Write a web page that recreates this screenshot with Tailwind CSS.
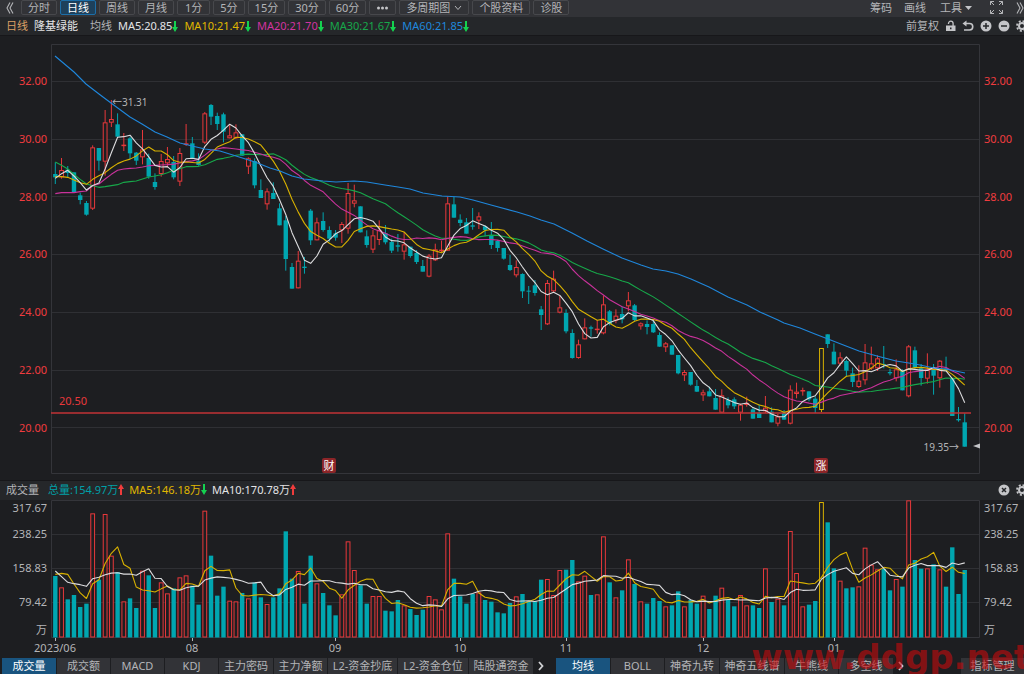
<!DOCTYPE html>
<html lang="zh-CN">
  <head>
    <meta charset="UTF-8" />
    <meta name="viewport" content="width=device-width, initial-scale=1.0" />
    <title>隆基绿能 - 日线</title>
    <script src="https://cdn.jsdelivr.net/npm/@tailwindcss/browser@4"></script>
  </head>
  <body class="relative min-h-screen flex flex-col overflow-hidden bg-[#1d1e21] text-[#b4b5b8] text-[11px] leading-4 whitespace-nowrap font-['Noto_Sans','Noto_Sans_CJK_SC',sans-serif]">
    <!-- Period toolbar -->
    <header class="flex items-start justify-between h-[17px] bg-[#323337] overflow-hidden">
      <nav class="flex gap-[3px] pl-[6px]">
        <button aria-label="收起" class="w-3 h-[15px]">
          <svg viewBox="0 0 8 12" class="w-2 h-3" fill="none" stroke="#b4b5b8" stroke-width="1.1"><path d="M4 .5 1 6l3 5.500M7 .5 4 6l3 5.500" /></svg>
        </button>
        <button class="h-[15px] leading-[13px] px-[6px] border border-[#47484c] rounded-xs">分时</button>
        <button class="h-[15px] leading-[13px] px-[6px] border border-[#1c6ea8] rounded-xs bg-[#1d405b] text-white">日线</button>
        <button class="h-[15px] leading-[13px] px-[6px] border border-[#47484c] rounded-xs">周线</button>
        <button class="h-[15px] leading-[13px] px-[6px] border border-[#47484c] rounded-xs">月线</button>
        <button class="h-[15px] leading-[13px] px-[7px] border border-[#47484c] rounded-xs">1分</button>
        <button class="h-[15px] leading-[13px] px-[6px] border border-[#47484c] rounded-xs">5分</button>
        <button class="h-[15px] leading-[13px] px-[6px] border border-[#47484c] rounded-xs">15分</button>
        <button class="h-[15px] leading-[13px] px-[6px] border border-[#47484c] rounded-xs">30分</button>
        <button class="h-[15px] leading-[13px] px-[6px] border border-[#47484c] rounded-xs">60分</button>
        <button aria-label="更多" class="flex items-center h-[15px] px-[6px] border border-[#47484c] rounded-xs">
          <svg viewBox="0 0 13 4" class="w-[13px] h-1" fill="#c4c5c8"><circle cx="2.500" cy="2" r="1.500" /><circle cx="6.500" cy="2" r="1.500" /><circle cx="10.500" cy="2" r="1.500" /></svg>
        </button>
        <button class="flex items-center gap-1 h-[15px] leading-[13px] px-[6px] border border-[#47484c] rounded-xs">
          多周期图
          <svg viewBox="0 0 8 6" class="w-2 h-[6px]" fill="none" stroke="#b4b5b8"><path d="m1 1 3 3.500L7 1" /></svg>
        </button>
        <button class="h-[15px] leading-[13px] px-[6px] border border-[#47484c] rounded-xs">个股资料</button>
        <button class="h-[15px] leading-[13px] px-[6px] border border-[#47484c] rounded-xs">诊股</button>
      </nav>
      <div class="flex items-center h-[15px]">
        <button class="mr-3">筹码</button>
        <button class="mr-[14px]">画线</button>
        <button class="flex items-center gap-[3px] mr-[18px]">
          工具
          <svg viewBox="0 0 7 4" class="w-[7px] h-1" fill="#c4c5c8"><path d="M0 0h7L3.500 4z" /></svg>
        </button>
        <button aria-label="全屏" class="mr-[13px]">
          <svg viewBox="0 0 13 13" class="w-[13px] h-[13px]" fill="none" stroke="#b4b5b8"><path d="M.5 4V.5H4M.5.5 4 4M9 .5h3.500V4M12.500.5 9 4M.5 9v3.500H4M.5 12.500 4 9M9 12.500h3.500V9M12.500 12.500 9 9" /></svg>
        </button>
        <button aria-label="展开">
          <svg viewBox="0 0 8 12" class="w-2 h-3" fill="none" stroke="#b4b5b8" stroke-width="1.1"><path d="m1 .5 3 5.500-3 5.500M4 .5 7 6l-3 5.500" /></svg>
        </button>
      </div>
    </header>

    <!-- Moving average legend -->
    <section class="flex items-center justify-between h-[18px] pl-[6px] bg-[#25272a] overflow-hidden">
      <div class="flex items-center">
        <span class="text-[#dba066]">日线</span>
        <span class="ml-[6px] text-[#e4e4e6]">隆基绿能</span>
        <span class="ml-3">均线</span>
        <span class="ml-[6px] flex items-center text-[#e4e4e6]">MA5:20.85<svg viewBox="0 0 6 11" class="w-[6px] h-[11px]" fill="#14d250"><path d="M2 0h2v6h2l-3 5-3-5h2z" /></svg></span>
        <span class="ml-[6px] flex items-center text-[#e0b800]">MA10:21.47<svg viewBox="0 0 6 11" class="w-[6px] h-[11px]" fill="#14d250"><path d="M2 0h2v6h2l-3 5-3-5h2z" /></svg></span>
        <span class="ml-[6px] flex items-center text-[#d233a0]">MA20:21.70<svg viewBox="0 0 6 11" class="w-[6px] h-[11px]" fill="#14d250"><path d="M2 0h2v6h2l-3 5-3-5h2z" /></svg></span>
        <span class="ml-[6px] flex items-center text-[#17a84a]">MA30:21.67<svg viewBox="0 0 6 11" class="w-[6px] h-[11px]" fill="#14d250"><path d="M2 0h2v6h2l-3 5-3-5h2z" /></svg></span>
        <span class="ml-[6px] flex items-center text-[#1f87dc]">MA60:21.85<svg viewBox="0 0 6 11" class="w-[6px] h-[11px]" fill="#14d250"><path d="M2 0h2v6h2l-3 5-3-5h2z" /></svg></span>
      </div>
      <div class="flex items-center gap-[6px] -mr-1">
        <button>前复权</button>
        <button aria-label="锁定">
          <svg viewBox="0 0 11 12" class="w-[11px] h-3"><path d="M3.500 4V3.500a2.300 2.300 0 0 1 4.600 0V6" fill="none" stroke="#c4c5c8" stroke-width="1.300" /><path d="M1 5.500h9.500V11H1z" fill="#c4c5c8" /><path d="M5 7.500h1.500v1.800H5z" fill="#25272a" /></svg>
        </button>
        <button aria-label="撤销">
          <svg viewBox="0 0 12 12" class="w-3 h-3"><path d="M3 3.500h4.500a3.200 3.200 0 0 1 0 6.500H2" fill="none" stroke="#c4c5c8" stroke-width="1.600" /><path d="M.5 3.500 4.500.5v6z" fill="#c4c5c8" /></svg>
        </button>
        <button aria-label="放大">
          <svg viewBox="0 0 12 12" class="w-3 h-3"><circle cx="6" cy="6" r="5.500" fill="#c4c5c8" /><path d="M6 3v6M3 6h6" stroke="#25272a" stroke-width="1.500" /></svg>
        </button>
        <button aria-label="缩小">
          <svg viewBox="0 0 12 12" class="w-3 h-3"><circle cx="6" cy="6" r="5.500" fill="#c4c5c8" /><path d="M3 6h6" stroke="#25272a" stroke-width="1.500" /></svg>
        </button>
        <button aria-label="设置">
          <svg viewBox="0 0 12 12" class="w-3 h-3" fill="none" stroke="#c4c5c8"><circle cx="6" cy="6" r="3" stroke-width="2" /><circle cx="6" cy="6" r="5" stroke-width="1.800" stroke-dasharray="2 1.927" /></svg>
        </button>
      </div>
    </section>

    <!-- Price chart -->
    <main class="flex flex-1 pt-2 pb-[6px] border-t border-[#17171a]">
      <div class="flex flex-col justify-between w-[51px] pt-[29px] pb-[38px] pr-1 text-right text-[#f03c3f]">
        <span>32.00</span><span>30.00</span><span>28.00</span><span>26.00</span><span>24.00</span><span>22.00</span><span>20.00</span>
      </div>
      <div class="relative flex-1">
        <svg id="price-chart" viewBox="51 44 929 430" preserveAspectRatio="none" class="absolute inset-0 w-full h-full"></svg>
        <span class="absolute left-[61px] top-[50px] text-[10px]">←31.31</span>
        <span class="absolute left-2 top-[349px] text-[#e8383b]">20.50</span>
        <span class="absolute right-[21px] top-[395px] text-[10px]">19.35→</span>
        <span class="absolute left-[271px] top-[414px] w-[14px] h-[15px] rounded-xs bg-[#8c2528] text-white text-center leading-[15px]">财</span>
        <span class="absolute left-[763px] top-[414px] w-[14px] h-[15px] rounded-xs bg-[#8c2528] text-white text-center leading-[15px]">涨</span>
      </div>
      <div class="flex flex-col justify-between w-11 pt-[29px] pb-[38px] pl-1 text-[#f03c3f]">
        <span>32.00</span><span>30.00</span><span>28.00</span><span>26.00</span><span>24.00</span><span>22.00</span><span>20.00</span>
      </div>
    </main>

    <!-- Volume legend -->
    <section class="flex items-center justify-between h-5 pb-[2px] pl-[6px] bg-[#25272a] border-t border-[#17171a] overflow-hidden">
      <div class="flex items-center">
        <span>成交量</span>
        <span class="ml-[9px] flex items-center text-[#00a0a8]">总量:154.97万<svg viewBox="0 0 6 11" class="w-[6px] h-[11px]" fill="#f03c3c"><path d="M2 11h2V5h2L3 0 0 5h2z" /></svg></span>
        <span class="ml-[5px] flex items-center text-[#e0b800]">MA5:146.18万<svg viewBox="0 0 6 11" class="w-[6px] h-[11px]" fill="#14d250"><path d="M2 0h2v6h2l-3 5-3-5h2z" /></svg></span>
        <span class="ml-[5px] flex items-center text-[#e4e4e6]">MA10:170.78万<svg viewBox="0 0 6 11" class="w-[6px] h-[11px]" fill="#f03c3c"><path d="M2 11h2V5h2L3 0 0 5h2z" /></svg></span>
      </div>
      <div class="flex items-center gap-[6px] -mr-1">
        <button aria-label="关闭">
          <svg viewBox="0 0 12 12" class="w-3 h-3"><circle cx="6" cy="6" r="5.500" fill="#c4c5c8" /><path d="m4 4 4 4M8 4 4 8" stroke="#25272a" stroke-width="1.500" /></svg>
        </button>
        <button aria-label="设置">
          <svg viewBox="0 0 12 12" class="w-3 h-3" fill="none" stroke="#c4c5c8"><circle cx="6" cy="6" r="3" stroke-width="2" /><circle cx="6" cy="6" r="5" stroke-width="1.800" stroke-dasharray="2 1.927" /></svg>
        </button>
      </div>
    </section>

    <!-- Volume chart -->
    <section class="flex h-[142px]">
      <div class="flex flex-col w-[51px] pr-1 text-right">
        <span class="h-[17px]">317.67</span>
        <span class="h-[34px] leading-[34px]">238.25</span>
        <span class="h-[34px] leading-[34px]">158.83</span>
        <span class="h-[34px] leading-[34px]">79.42</span>
        <span class="leading-[22px]">万</span>
      </div>
      <div class="relative flex-1">
        <svg id="volume-chart" viewBox="51 500 929 142" preserveAspectRatio="none" class="absolute inset-0 w-full h-full"></svg>
      </div>
      <div class="flex flex-col w-11 pl-1">
        <span class="h-[17px]">317.67</span>
        <span class="h-[34px] leading-[34px]">238.25</span>
        <span class="h-[34px] leading-[34px]">158.83</span>
        <span class="h-[34px] leading-[34px]">79.42</span>
        <span class="leading-[22px]">万</span>
      </div>
    </section>

    <!-- Months -->
    <div class="grid grid-cols-[137fr_143fr_125fr_106fr_137fr_131fr_190fr] h-4 pl-[55px] leading-[12px]">
      <div><span class="inline-block -translate-x-1/2">2023/06</span></div>
      <div><span class="inline-block -translate-x-1/2">08</span></div>
      <div><span class="inline-block -translate-x-1/2">09</span></div>
      <div><span class="inline-block -translate-x-1/2">10</span></div>
      <div><span class="inline-block -translate-x-1/2">11</span></div>
      <div><span class="inline-block -translate-x-1/2">12</span></div>
      <div><span class="inline-block -translate-x-1/2">01</span></div>
    </div>

    <!-- Indicator tabs -->
    <footer class="flex items-stretch justify-between h-4 leading-4">
      <div class="flex gap-px pl-[2px]">
        <button class="w-[54px] bg-[#19547f] text-white">成交量</button>
        <button class="w-[53px] bg-[#323337]">成交额</button>
        <button class="w-[53px] bg-[#323337]">MACD</button>
        <button class="w-[53px] bg-[#323337]">KDJ</button>
        <button class="w-[54px] bg-[#323337]">主力密码</button>
        <button class="w-[53px] bg-[#323337]">主力净额</button>
        <button class="w-[69px] bg-[#323337]">L2-资金抄底</button>
        <button class="w-[70px] bg-[#323337]">L2-资金仓位</button>
        <button class="w-[64px] bg-[#323337]">陆股通资金</button>
        <button aria-label="更多指标" class="w-[21px] pl-1">
          <svg viewBox="0 0 6 10" class="w-[6px] h-[10px]" fill="none" stroke="#d0d1d4" stroke-width="1.800"><path d="m1 1 3.500 4L1 9" /></svg>
        </button>
        <button class="w-[54px] bg-[#19547f] text-white">均线</button>
        <button class="w-[53px] bg-[#323337]">BOLL</button>
        <button class="w-[54px] bg-[#323337]">神奇九转</button>
        <button class="w-[64px] bg-[#323337]">神奇五线谱</button>
        <button class="w-[53px] bg-[#323337]">牛熊线</button>
        <button class="w-[54px] bg-[#323337]">多空线</button>
        <button aria-label="更多均线" class="w-4 pl-1">
          <svg viewBox="0 0 6 10" class="w-[6px] h-[10px]" fill="none" stroke="#d0d1d4" stroke-width="1.800"><path d="m1 1 3.500 4L1 9" /></svg>
        </button>
      </div>
      <button class="w-[63px] bg-[#323337]">指标管理</button>
    </footer>

    <div class="absolute -right-[6px] bottom-0 text-[34px] leading-[34px] font-bold text-[#c80a0c]/60 font-['DejaVu_Sans'] pointer-events-none">www.ddgp.net</div>

    <script>
      // Candles: kind, body top, body bottom, high, low (1/3 px below `top`).
      // d = down, u = up, y = marked
      const blocks = [
        { top: 40, rows: `d 402 412 367 432,u 390 412 354 416,d 389 399 378 412,d 397 458 397 458,d 466 480 458 493,d 489 524 483 527,u 322 506 316 510,d 324 362 324 392,u 247 365 210 407,u 237 248 180 261,d 253 290 220 290,u 314 318 279 333,d 295 340 290 357,d 338 362 336 375,u 328 352 270 373,d 354 410 341 416,d 426 441 400 449,u 363 402 342 410,u 357 370 321 382,d 366 412 348 418,u 339 425 324 438,u 310 314 252 318,d 310 355 291 355,d 362 375 340 377,u 220 308 216 312,d 195 230 192 255,d 228 252 218 270,d 223 275 218 307,u 286 295 255 295,u 277 295 253 297,d 283 347 283 347,u 355 380 352 402` },
        { top: 150, rows: `d 33 106 25 115,d 120 144 88 144,u 124 163 115 179,d 129 147 97 147,d 175 226 160 226,d 211 327 198 362,d 351 416 339 416,u 332 415 303 415,d 350 354 321 371,d 182 271 177 285,u 217 271 203 271,d 213 240 187 245,d 240 266 229 275,d 250 263 240 272,u 222 241 216 279,u 129 236 99 251,u 151 161 104 172,d 169 247 169 247,d 259 285 241 293,u 256 299 240 309,u 240 270 211 285,d 250 277 225 283,d 276 302 266 309,d 286 290 252 305,u 283 305 246 329,d 290 318 290 323,d 309 336 300 342,d 348 365 330 365,u 317 380 312 382,u 298 331 281 333,u 299 303 272 307,u 160 302 140 302,d 163 203 141 203,d 209 219 193 229,d 217 251 204 251,d 226 230 174 239,u 199 212 187 237,d 229 240 226 259,d 255 285 216 297,d 273 294 270 305` },
        { top: 190, rows: `d 174 206 174 209,d 225 240 195 243,u 231 256 211 262,d 252 304 250 324,d 302 304 288 342,d 286 309 270 317,d 358 375 348 420,u 279 403 270 405,u 266 304 242 306,u 352 368 318 370,d 369 424 358 430,d 429 504 418 506,u 463 504 449 506,u 412 448 385 448,d 412 416 407 440,u 416 420 390 431,u 343 430 317 433,d 364 402 360 406,u 377 392 358 400,d 372 388 350 400,u 331 349 306 364,d 346 390 342 393,u 400 409 397 419,d 402 411 391 433,d 402 427 392 429,d 435 470 427 470,u 460 472 456 486,d 466 494 466 494,d 495 550 495 553,u 546 556 540 573,d 546 584 546 587,d 588 605 570 606,u 607 616 599 633,d 604 619 590 619,d 624 659 597 659,u 616 668 598 668,d 630 646 622 655,d 628 649 622 657,u 644 668 641 692,u 639 645 620 650` },
        { top: 320, rows: `d 268 296 262 296,d 278 294 253 294,u 263 274 228 279,d 275 307 262 307,u 289 311 282 319,d 278 299 270 299,u 209 311 196 313,u 215 222 188 235,u 210 214 203 227,d 214 238 214 244,d 236 264 229 279,y 84 270 84 276,d 43 72 43 84,d 95 133 70 133,u 112 131 97 137,d 123 152 119 170,d 160 186 143 201,u 182 201 136 204,u 127 181 72 194,u 130 146 80 150,u 115 145 106 153,d 132 135 78 145,d 156 160 147 166,u 148 175 118 184,d 152 211 148 211,u 79 229 75 232,d 91 142 80 146,d 145 174 132 197,u 150 176 100 191,d 145 167 132 224,u 122 175 120 203,d 146 151 110 151,d 175 288 175 288,d 297 301 261 305,d 307 380 280 380` },
      ];

      // Volume bar tops, 1/3 px below 480
      const volumes = [
        288, 322, 358, 345, 381, 371, 100, 299, 102, 227, 276, 364, 355, 384, 272, 286, 384, 307, 340, 325,
        292, 286, 317, 374, 92, 227, 347, 320, 362, 364, 339, 355, 307, 352, 372, 352, 325, 154, 296, 273,
        371, 227, 310, 339, 376, 406, 343, 184, 270, 316, 371, 348, 348, 392, 394, 360, 376, 387, 405, 389,
        348, 358, 388, 160, 296, 349, 371, 342, 337, 360, 365, 397, 400, 369, 349, 342, 364, 364, 299, 297,
        345, 270, 269, 240, 304, 287, 345, 343, 169, 307, 352, 331, 238, 312, 364, 371, 354, 363, 379, 376,
        334, 379, 360, 371, 347, 387, 347, 323, 360, 379, 345, 376, 376, 384, 265, 366, 356, 376, 153, 279,
        379, 374, 363, 66, 127, 265, 302, 325, 322, 319, 203, 254, 268, 267, 331, 297, 320, 61, 240, 266,
        265, 253, 268, 320, 202, 342, 270,
      ].map((v) => 480 + v / 3);

      const ma60 = [
        [55, 56], [74, 72], [86, 84], [99, 94], [111, 103], [130, 117], [142, 124], [155, 132], [167, 137],
        [180, 143], [192, 146], [205, 149], [220, 151], [236, 156], [255, 162], [270, 168], [280, 171],
        [292, 176], [304, 179], [323, 181], [336, 182], [354, 181], [367, 182], [385, 185], [398, 187],
        [410, 189], [423, 193], [442, 196], [460, 197], [473, 200], [491, 205], [517, 212], [530, 216],
        [541, 220], [554, 224], [572, 233], [587, 241], [603, 249], [622, 258], [641, 265], [653, 269],
        [666, 271], [678, 274], [691, 279], [709, 287], [728, 297], [747, 305], [760, 312], [778, 320],
        [784, 323], [800, 328], [815, 334], [828, 339], [846, 346], [859, 351], [877, 356], [896, 361],
        [915, 364], [934, 368], [946, 369], [965, 373],
      ];

      const colors = { d: "#00a6b0", u: "#e8383b", y: "#d8b100" };
      const px = (i) => 55.3 + i * 6.229;

      const candles = blocks.flatMap(({ top, rows }) =>
        rows.split(",").map((row) => {
          const [kind, ...v] = row.split(" ");
          const [bodyTop, bodyBottom, high, low] = v.map((n) => top + n / 3);
          return { kind, bodyTop, bodyBottom, high, low };
        })
      );

      function average(values, n, start) {
        return values.map((_, i) => {
          if (i < start.length) return [px(i), start[i]];
          const part = values.slice(Math.max(0, i - n + 1), i + 1);
          return [px(i), part.reduce((a, b) => a + b, 0) / part.length];
        });
      }

      function line(points, color) {
        return `<polyline points="${points.map((p) => p.join()).join(" ")}" fill="none" stroke="${color}" stroke-width="1.1" stroke-linejoin="round"/>`;
      }

      function bar(kind, x, y1, y2) {
        if (kind === "d") {
          return `<rect x="${x - 2.2}" y="${y1}" width="4.4" height="${Math.max(1, y2 - y1)}" fill="${colors.d}"/>`;
        }
        return `<rect x="${x - 1.9}" y="${y1 + 0.5}" width="3.8" height="${Math.max(0.5, y2 - y1 - 1)}" fill="#1d1e21" stroke="${colors[kind]}"/>`;
      }

      function grid(lines, top, bottom) {
        return (
          lines.map((y) => `<path d="M51 ${y}H980" stroke="#2f3034"/>`).join("") +
          `<path d="M51.5 ${top}H979.5V${bottom}H51.5z" fill="none" stroke="#34353a"/>`
        );
      }

      const seed = (list, top) => list.map((v) => top + v / 3);
      const closes = candles.map((c) => (c.kind === "d" ? c.bodyBottom : c.bodyTop));
      const s5 = seed([415, 401, 391, 408], 40);
      const s10 = seed([410, 410, 412, 420, 428, 433, 418, 407, 398], 40);
      const s20 = seed([461, 458, 458, 458, 455, 453, 437, 432, 417, 403, 391, 387, 385, 384, 381, 377, 376, 375, 374], 40);
      const s30 = seed([366, 376, 387, 403, 418, 432, 437, 442, 440, 437, 434, 427, 425, 423, 417, 411, 408, 404, 398, 391, 386, 380, 380, 379, 374, 366, 358, 355, 351], 40);

      document.getElementById("price-chart").innerHTML =
        grid([81.5, 139.5, 196.5, 254.5, 312.5, 370.5, 427.5], 44.5, 473.5) +
        candles
          .map((c, i) => {
            const x = px(i);
            return `<path d="M${x} ${c.high}V${c.low}" stroke="${colors[c.kind]}"/>` + bar(c.kind, x, c.bodyTop, c.bodyBottom);
          })
          .join("") +
        `<path d="M51 413H971" stroke="#c23336" stroke-width="1.300"/>` +
        line(average(closes, 30, s30), "#17a84a") +
        line(average(closes, 20, s20), "#c9329b") +
        line(average(closes, 10, s10), "#d8b100") +
        line(average(closes, 5, s5), "#dcdcde") +
        line(ma60, "#1f87dc") +
        `<path d="M973 446l7-2.500v5z" fill="#c4c5c8"/>`;

      const v5 = seed([283, 280, 283, 312], 480);
      const v10 = seed([273, 290, 307, 311, 314, 319, 296, 292, 284], 480);

      document.getElementById("volume-chart").innerHTML =
        grid([534.5, 568.5, 602.5], 500.5, 637.5) +
        volumes.map((y, i) => bar(candles[i].kind, px(i), y, 637.5)).join("") +
        line(average(volumes, 5, v5), "#d8b100") +
        line(average(volumes, 10, v10), "#dcdcde") +
        [55.5, 192.5, 335.5, 460.5, 566.5, 703.5, 834.5].map((x) => `<path d="M${x} 638v3" stroke="#b4b5b8"/>`).join("");
    </script>
  </body>
</html>
